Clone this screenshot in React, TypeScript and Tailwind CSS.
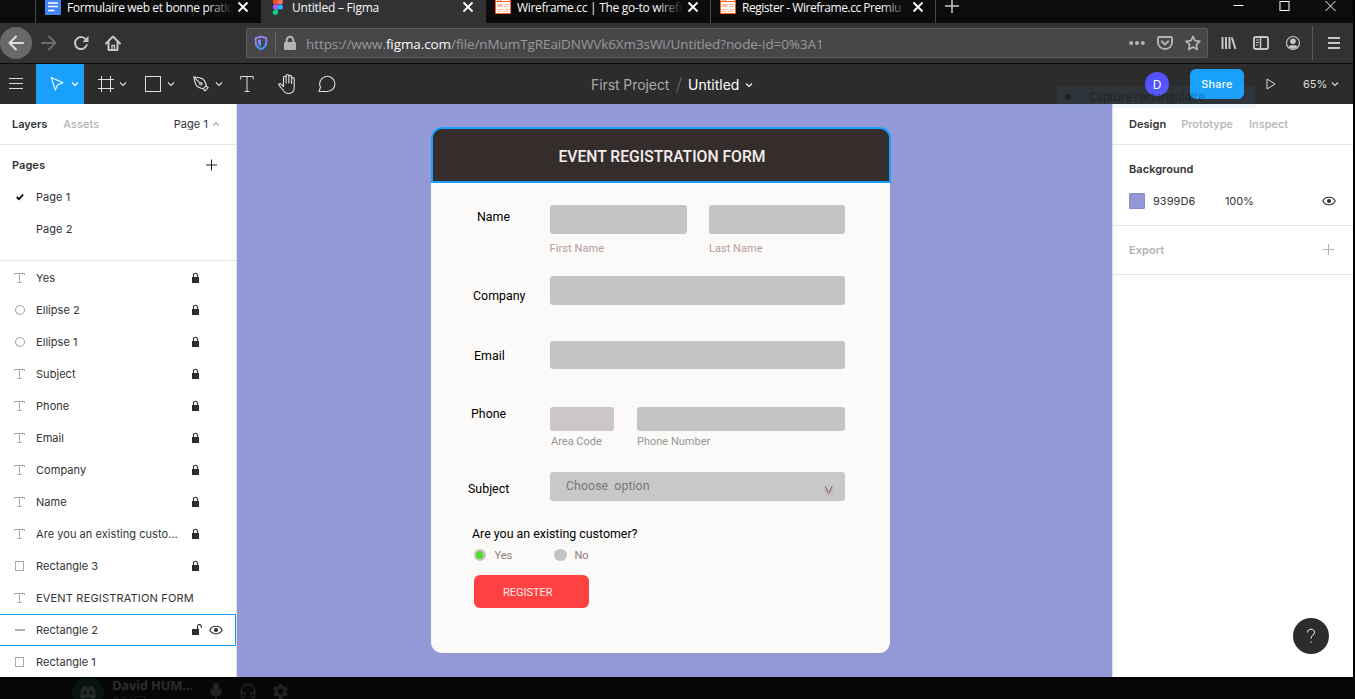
import type { ReactNode } from "react";
import { Mic, Headphones } from "lucide-react";
import { MdSettings } from "react-icons/md";

type IconProps = { children: ReactNode; w?: number; h?: number; className?: string };

function Icon({ children, w = 16, h = 16, className = "" }: IconProps) {
  return (
    <svg width={w} height={h} viewBox={`0 0 ${w} ${h}`} fill="none" stroke="currentColor" className={`shrink-0 ${className}`}>
      {children}
    </svg>
  );
}

const Chevron = ({ className = "" }: { className?: string }) => (
  <Icon w={8} h={6} className={className}>
    <path d="M1 1.5l3 3 3-3" strokeWidth="1.1" />
  </Icon>
);

const Close = () => (
  <Icon w={12} h={12} className="text-white">
    <path d="M1.5 1.5l9 9M10.5 1.5l-9 9" strokeWidth="1.8" />
  </Icon>
);

const DocsIcon = () => (
  <Icon className="mt-[-1px]">
    <rect width="16" height="16" rx="1.5" fill="#4285f4" stroke="none" />
    <path d="M3 4h10M3 7.5h10M3 11.5h6.5" stroke="#fff" strokeWidth="1.6" />
  </Icon>
);

const FigmaIcon = () => (
  <Icon w={12} h={16} className="mx-[2px] mt-[-1px]">
    <g stroke="none">
      <path d="M6 0H3.5a2.6 2.6 0 000 5.3H6z" fill="#f24e1e" />
      <path d="M6 0h2.2a2.6 2.6 0 010 5.3H6z" fill="#ff7262" />
      <path d="M6 5.3H3.5a2.6 2.6 0 000 5.3H6z" fill="#a259ff" />
      <circle cx="8.3" cy="8" r="2.6" fill="#1abcfe" />
      <path d="M3.4 10.6H6v2.6a2.6 2.6 0 11-2.6-2.6z" fill="#0acf83" />
    </g>
  </Icon>
);

const WireframeIcon = () => (
  <Icon className="mt-[-2px]">
    <rect width="16" height="16" rx="1" fill="#ff5a1f" stroke="none" />
    <rect x="1" y="4" width="14" height="11" fill="#fff" stroke="none" />
    <path d="M1 2.5h1.500M3.500 2.500h1.500M6 2.500h8.500" stroke="#fff" strokeWidth="1" />
    <rect x="2.500" y="6" width="5" height="3" fill="#ffb896" stroke="none" />
    <path d="M9 6.500h5M9 8.500h4M2.500 11.500h6M10 11.500h4M2.500 13.500h4M8 13.500h5" stroke="#ffb896" />
  </Icon>
);

type TabProps = { icon: ReactNode; title: string; titleClass: string; active?: boolean; className: string };

function Tab({ icon, title, titleClass, active, className }: TabProps) {
  return (
    <div className={`flex h-[23px] shrink-0 items-start pl-[9px] pt-0 ${active ? "bg-[#323234]" : "bg-[#0c0c0d]"} ${className}`}>
      {icon}
      <div className="relative ml-[6px] w-[166px] shrink-0 overflow-hidden">
        <span className={`block whitespace-nowrap font-['Open_Sans',sans-serif] text-[12px] leading-[16px] text-[#f9f9fa] ${titleClass}`}>{title}</span>
        {!active && <span className="absolute inset-y-0 right-0 w-[26px] bg-gradient-to-r from-transparent to-[#0c0c0d]" />}
      </div>
      <div className="ml-[4px] mt-[1px]"><Close /></div>
    </div>
  );
}

function TabBar() {
  return (
    <div className="flex h-[23px] items-start bg-[#0c0c0d]">
      <div className="h-[23px] w-[36px] border-r border-[#4a4a4b]" />
      <Tab className="w-[225px]" icon={<DocsIcon />} title="Formulaire web et bonne pratiq" titleClass="tracking-[-0.36px]" />
      <Tab className="w-[225px]" active icon={<FigmaIcon />} title="Untitled – Figma" titleClass="tracking-[-0.22px]" />
      <Tab className="w-[225px] border-r border-[#4a4a4b]" icon={<WireframeIcon />} title="Wireframe.cc | The go-to wirefr" titleClass="tracking-[-0.3px]" />
      <Tab className="w-[225px] border-r border-[#4a4a4b]" icon={<WireframeIcon />} title="Register - Wireframe.cc Premiu" titleClass="tracking-[-0.46px]" />
      <Icon className="ml-2 mt-[-2px] text-[#c8c8c9]"><path d="M8 1v14M1 8h14" strokeWidth="1.500" /></Icon>
      <div className="ml-auto flex items-start gap-[35px] pr-[17px] text-white">
        <Icon w={11} h={14}><path d="M0.500 5.500h10" strokeWidth="1" /></Icon>
        <Icon w={11} h={14}><rect x="1" y="1.500" width="9" height="9" strokeWidth="1" /></Icon>
        <Icon w={11} h={14}><path d="M0.500 1l10 10M10.500 1l-10 10" strokeWidth="1" /></Icon>
      </div>
    </div>
  );
}

function NavBar() {
  return (
    <div className="flex h-[41px] items-center border-b border-[#0c0c0d] bg-[#323234] text-[#c6c6c7]">
      <div className="flex size-8 shrink-0 items-center justify-center rounded-full bg-[#69696a]">
        <Icon className="text-[#dededf]"><path d="M15 8H1.500M8 1.500L1.500 8 8 14.500" strokeWidth="2" strokeLinecap="round" strokeLinejoin="round" /></Icon>
      </div>
      <Icon className="ml-[9px] text-[#6d6d6e]"><path d="M1 8h13.500M8 1.500L14.500 8 8 14.500" strokeWidth="2" strokeLinecap="round" strokeLinejoin="round" /></Icon>
      <Icon className="ml-[16px]">
        <path d="M13.300 5.200A6 6 0 1013.700 10" strokeWidth="2" strokeLinecap="round" />
        <path d="M15.500 1v6h-6z" fill="currentColor" stroke="none" />
      </Icon>
      <Icon className="ml-[16px]">
        <path d="M1 8.500L8 1.500l7 7M3.500 7v8h9V7" strokeWidth="2" strokeLinecap="round" strokeLinejoin="round" />
        <path d="M7 15v-4.500h2.500V15" strokeWidth="1.300" />
      </Icon>
      <div className="ml-[125px] flex h-[30px] w-[962px] items-center rounded-[2px] border border-[#5d5d5f] bg-[#474749]">
        <Icon w={14} h={16} className="ml-[7px]">
          <defs>
            <linearGradient id="shield" x1="0" y1="0" x2="0.300" y2="1">
              <stop offset="0" stopColor="#b57cf5" />
              <stop offset="1" stopColor="#3e9bff" />
            </linearGradient>
          </defs>
          <path d="M7 1.700l5.300 1.500v3.800c0 3.500-2 5.800-5.300 7.200-3.300-1.400-5.300-3.700-5.300-7.200V3.200z" stroke="url(#shield)" strokeWidth="1.900" strokeLinejoin="round" />
          <path d="M7 4.200l-3 .800v2.500c0 2 1 3.200 3 4.200z" fill="url(#shield)" stroke="none" />
        </Icon>
        <div className="ml-[7px] h-[22px] w-px bg-[#68686a]" />
        <Icon w={14} h={16} className="ml-[7px] text-[#b4b4b5]">
          <rect x="1" y="7" width="12" height="8" rx="1.300" fill="currentColor" stroke="none" />
          <path d="M3.700 8V5a3.300 3.300 0 016.600 0v3" strokeWidth="2" />
        </Icon>
        <div className="ml-[9px] whitespace-nowrap pt-[2px] font-['Open_Sans',sans-serif] text-[13.5px] leading-[20px] tracking-[-0.09px] text-[#98989a]">
          https://www.<span className="text-[#f9f9fa]">figma.com</span>/file/nMumTgREaiDNWVk6Xm3sWi/Untitled?node-id=0%3A1
        </div>
        <div className="ml-auto flex items-center gap-3 pr-[6px] text-[#b4b4b5]">
          <Icon><g fill="currentColor" stroke="none"><circle cx="2.200" cy="8" r="2" /><circle cx="8" cy="8" r="2" /><circle cx="13.800" cy="8" r="2" /></g></Icon>
          <Icon><path d="M2 2h12a1 1 0 011 1v4.500a7 6.500 0 01-14 0V3a1 1 0 011-1z" strokeWidth="1.900" /><path d="M4.700 6.300L8 9.500l3.300-3.200" strokeWidth="1.900" strokeLinecap="round" strokeLinejoin="round" /></Icon>
          <Icon><path d="M8 1.300l2 4.400 4.900.600-3.600 3.300.900 4.900L8 12.100l-4.200 2.400.900-4.900L1.100 6.300l4.900-.600z" strokeWidth="1.700" strokeLinejoin="round" /></Icon>
        </div>
      </div>
      <Icon className="ml-[13px]"><path d="M1.500 2v12M5 2v12M8.500 2v12M10.800 2.500l3.700 11.500" strokeWidth="2" /></Icon>
      <Icon className="ml-4"><rect x="1" y="2" width="14" height="12" rx="1.500" strokeWidth="1.900" /><path d="M7.500 2v12" strokeWidth="1.500" /><path d="M3 5h3M3 7.500h3M3 10h2" strokeWidth="1" /></Icon>
      <Icon className="ml-4"><circle cx="8" cy="8" r="6.500" strokeWidth="1.200" /><circle cx="8" cy="6.300" r="2.800" fill="currentColor" stroke="none" /><path d="M3.500 11.800c1-1.700 2.500-1.500 4.500-1.500s3.500-.200 4.500 1.500c-1.300 1.400-3 2-4.500 2s-3.200-.600-4.500-2z" fill="currentColor" stroke="none" /></Icon>
      <div className="ml-[11px] h-[34px] w-px bg-[#5a5a5c]" />
      <Icon className="ml-[13px]"><path d="M2 3h12M2 8h12M2 13h12" strokeWidth="2" /></Icon>
    </div>
  );
}

function Toolbar() {
  return (
    <div className="flex h-[40px] items-center bg-[#2c2c2c] font-[Inter,sans-serif] text-[#dedede]">
      <Icon w={14} h={14} className="ml-[9px] mt-[-2px]"><path d="M0 2.500h14M0 7.500h14M0 12.500h14" /></Icon>
      <div className="ml-[13px] flex h-[40px] w-[48px] items-center bg-[#18a0fb] text-white">
        <Icon w={14} h={16} className="ml-[14px]"><path d="M1.300 1.500l4 12.500 2.300-5.200L13 6.800z" strokeWidth="1.100" strokeLinejoin="round" /></Icon>
        <Chevron className="ml-[7px]" />
      </div>
      <Icon w={16} h={16} className="ml-[14px]"><path d="M3.500 0v16M12.500 0v16M0 3.500h16M0 12.500h16" /></Icon>
      <Chevron className="ml-[5px]" />
      <Icon w={16} h={16} className="ml-[18px]"><rect x="0.500" y="0.500" width="15" height="15" /></Icon>
      <Chevron className="ml-[6px]" />
      <Icon w={16} h={16} className="ml-[18px]">
        <path d="M.800.800C2.500 1.200 5.500 1.600 8.500 2.400c1.700.500 4 3.600 4.700 7.300l-2.900 3C6.500 12 3.300 9.800 2.700 8.200 1.800 5.500 1.300 3 .800.800zl6 6M10.300 12.900l1.700 2 3.200-3.200-2-1.700" strokeWidth="1.100" strokeLinejoin="round" />
        <circle cx="7.800" cy="7.800" r="1.200" strokeWidth="1.100" />
      </Icon>
      <Chevron className="ml-[6px]" />
      <Icon w={14} h={16} className="ml-[17px]"><path d="M.700 3.500v-3h12.500v3M7 .500v15M4.500 15.500h5" /></Icon>
      <Icon w={18} h={20} className="ml-[24px]">
        <path d="M5.500 11.500V3.500a1.300 1.300 0 012.600 0V9M8.100 8V1.900a1.300 1.300 0 012.700 0V9M10.800 8V2.700a1.300 1.300 0 012.700 0V9.500M13.500 8.500V5a1.300 1.300 0 012.700 0v8c0 4-2.300 6.500-5.700 6.500-3 0-4.300-1.300-5.500-3.500L1 11.200c-.600-1.200.700-2.200 1.700-1.400l2.800 2.700" strokeWidth="1.100" strokeLinecap="round" />
      </Icon>
      <Icon w={18} h={18} className="ml-[22px]"><path d="M1 16.500l1.500-4.200A7.600 7.600 0 119.300 16.500z" strokeWidth="1.100" strokeLinejoin="round" /></Icon>
      <div className="ml-[255px] flex items-center whitespace-nowrap pt-[2px] text-[14px] leading-[20px]">
        <span className="w-[79px] tracking-[-0.08px] text-[#a9a9a9]">First Project</span>
        <Icon w={8} h={18} className="ml-[5px] text-[#6e6e6e]"><path d="M1.500 16.500L6.500 1" /></Icon>
        <span className="ml-[5px] w-[52px] tracking-[0px] text-white">Untitled</span>
        <Chevron className="ml-[5px] text-white" />
      </div>
      <div className="ml-auto flex items-center pr-[14px]">
        <div className="flex size-6 items-center justify-center rounded-full bg-[#5551ff] pt-px text-[12px] text-white">D</div>
        <div className="ml-[21px] flex h-[30px] w-[54px] items-center justify-center rounded-[6px] bg-[#18a0fb] text-[11px] font-medium tracking-[0.2px] text-white">Share</div>
        <Icon w={10} h={12} className="ml-[22px]"><path d="M1 1v10l8-5z" strokeLinejoin="round" /></Icon>
        <span className="ml-[27px] w-[24px] text-[11px]">65%</span>
        <Chevron className="ml-[4px]" />
      </div>
    </div>
  );
}

const TypeGlyph = () => <Icon w={12} h={12}><path d="M0.500 3V1.500h10V3M5.500 1.500v9M3.500 10.500h4" /></Icon>;
const EllipseGlyph = () => <Icon w={12} h={12}><circle cx="6" cy="6" r="4.500" strokeWidth="1.100" /></Icon>;
const RectGlyph = () => <Icon w={12} h={12}><rect x="1.500" y="1.500" width="8" height="9" /></Icon>;
const LineGlyph = () => <Icon w={12} h={12}><path d="M1 6h10" strokeWidth="1.800" /></Icon>;

const LockIcon = () => (
  <Icon w={8} h={12} className="ml-px text-[#2c2c2c]">
    <rect x="0" y="5" width="7" height="6" fill="currentColor" stroke="none" />
    <path d="M1.500 5.500V3.300a2 2 0 014 0v2.200" strokeWidth="1.100" />
  </Icon>
);

const EyeIcon = () => (
  <Icon w={14} h={10} className="text-[#2c2c2c]">
    <path d="M.800 5C2 2.500 4.300 1.200 7 1.200S12 2.500 13.200 5C12 7.500 9.700 8.800 7 8.800S2 7.500.800 5z" strokeWidth="1.100" />
    <circle cx="7" cy="5" r="2" fill="currentColor" stroke="none" />
  </Icon>
);

type Layer = { name: string; kind: "text" | "ellipse" | "rect" | "line"; locked?: boolean; selected?: boolean };

const layers: Layer[] = [
  { name: "Yes", kind: "text", locked: true },
  { name: "Ellipse 2", kind: "ellipse", locked: true },
  { name: "Ellipse 1", kind: "ellipse", locked: true },
  { name: "Subject", kind: "text", locked: true },
  { name: "Phone", kind: "text", locked: true },
  { name: "Email", kind: "text", locked: true },
  { name: "Company", kind: "text", locked: true },
  { name: "Name", kind: "text", locked: true },
  { name: "Are you an existing custo...", kind: "text", locked: true },
  { name: "Rectangle 3", kind: "rect", locked: true },
  { name: "EVENT REGISTRATION FORM", kind: "text" },
  { name: "Rectangle 2", kind: "line", selected: true },
  { name: "Rectangle 1", kind: "rect" },
];

const glyphs = { text: <TypeGlyph />, ellipse: <EllipseGlyph />, rect: <RectGlyph />, line: <LineGlyph /> };

function LeftPanel() {
  return (
    <aside className="flex w-[237px] shrink-0 flex-col overflow-hidden border-r border-[#e0e0e0] bg-white text-[11px] leading-4 tracking-[0.05px] text-[#333]">
      <div className="flex h-[41px] shrink-0 items-center border-b border-[#e5e5e5] pl-3">
        <span className="font-semibold tracking-[-0.05px]">Layers</span>
        <span className="ml-4 font-medium text-[#b3b3b3]">Assets</span>
        <span className="ml-auto">Page 1</span>
        <Chevron className="ml-[4px] mr-[16px] rotate-180 text-[#aaa]" />
      </div>
      <div className="h-[116px] shrink-0 border-b border-[#e5e5e5] pt-1">
        <div className="flex h-8 items-center justify-between pl-3 pr-[19px]">
          <span className="font-semibold">Pages</span>
          <Icon w={12} h={12} className="text-[#222]"><path d="M6.500 0.500v11M1 6h11" /></Icon>
        </div>
        <div className="flex h-8 items-center">
          <Icon w={8} h={8} className="ml-4 text-black"><path d="M.800 4l2.200 2.200L7.200 1.500" strokeWidth="1.800" /></Icon>
          <span className="ml-3">Page 1</span>
        </div>
        <div className="flex h-8 items-center pl-9">Page 2</div>
      </div>
      <div className="flex flex-col pt-px">
        {layers.map((l) => (
          <div key={l.name} className={`flex h-8 shrink-0 items-center border-y border-r pl-[14px] ${l.selected ? "border-[#18a0fb]" : "border-transparent"}`}>
            <span className="text-[#aaa]">{glyphs[l.kind]}</span>
            <span className={`ml-[10px] w-[155px] whitespace-nowrap ${l.name === "EVENT REGISTRATION FORM" ? "tracking-[0.18px]" : ""}`}>{l.name}</span>
            {l.locked && <LockIcon />}
            {l.selected && (
              <>
                <Icon w={12} h={12} className="ml-px text-[#2c2c2c]">
                  <rect x="0" y="5" width="7" height="6" fill="currentColor" stroke="none" />
                  <path d="M5.500 5.500V2.500a1.900 1.900 0 013.800 0V4" strokeWidth="1.100" />
                </Icon>
                <div className="ml-[5px]"><EyeIcon /></div>
              </>
            )}
          </div>
        ))}
      </div>
    </aside>
  );
}

function RightPanel() {
  return (
    <aside className="flex w-[241px] shrink-0 flex-col border-l border-[#e0e0e0] bg-white text-[11px] leading-4 tracking-[0.05px] text-[#333]">
      <div className="flex h-[41px] items-center border-b border-[#e5e5e5] pl-4 font-medium tracking-[0.03px] text-[#b3b3b3]">
        <span className="font-semibold text-[#333]">Design</span>
        <span className="ml-[15px]">Prototype</span>
        <span className="ml-4">Inspect</span>
      </div>
      <div className="h-[81px] border-b border-[#e5e5e5] pl-4 pt-4">
        <div className="font-semibold">Background</div>
        <div className="mt-4 flex items-center">
          <div className="size-4 rounded-[1px] border border-[#868cc4] bg-[#9399d6]" />
          <span className="ml-2 w-[72px]">9399D6</span>
          <span className="tracking-[-0.1px]">100%</span>
          <div className="ml-auto mr-[17px]"><EyeIcon /></div>
        </div>
      </div>
      <div className="flex h-[49px] items-center justify-between border-b border-[#e5e5e5] pl-4 pr-[19px] text-[#b3b3b3]">
        <span className="font-semibold">Export</span>
        <Icon w={12} h={12}><path d="M6.500 0v11M1 5.500h11" /></Icon>
      </div>
      <div className="ml-auto mr-[24px] mt-auto mb-[23px] flex size-9 items-center justify-center rounded-full bg-[#2c2c2c] text-white">
        <Icon w={10} h={16}><path d="M1.500 4.500C1.500 2.300 3 1.200 5 1.200s3.500 1.200 3.500 3.200C8.500 7 5 7.300 5 10.500M5 13.500v1.300" strokeWidth="1" /></Icon>
      </div>
    </aside>
  );
}

const Field = ({ className }: { className: string }) => <div className={`shrink-0 rounded-[3px] bg-[#c4c4c4] ${className}`} />;

function FormCard() {
  return (
    <div className="ml-[194px] mt-[23px] flex h-[526px] w-[459px] flex-col rounded-[11px] bg-[#fbfaf8] font-[Roboto,sans-serif] text-[12.4px] leading-4 text-black">
      <div className="flex h-[56px] w-[460px] shrink-0 items-center justify-center rounded-t-[11px] border-2 border-[#189ffb] bg-[#352d2c] pt-[4px] text-[15.7px] font-medium leading-5 text-[#f3efef]">
        <span className="ml-[2px]">EVENT REGISTRATION FORM</span>
      </div>
      <div className="mt-[22px] flex h-[70px] shrink-0">
        <span className="w-[118.5px] pl-[46px] pt-[4px]">Name</span>
        <div className="w-[159.5px] text-[11px] tracking-[0.08px] text-[#b79b9b]">
          <Field className="h-[28.5px] w-[137.5px]" />
          <div className="pt-[7px]">First Name</div>
        </div>
        <div className="text-[11px] tracking-[0.04px] text-[#b79b9b]">
          <Field className="h-[28.5px] w-[136px]" />
          <div className="pt-[7px]">Last Name</div>
        </div>
      </div>
      <div className="flex h-[65px] shrink-0">
        <span className="w-[118.5px] pl-[42px] pt-[13px]">Company</span>
        <Field className="mt-[0.5px] h-[29.5px] w-[295.5px]" />
      </div>
      <div className="flex h-[66px] shrink-0">
        <span className="w-[118.5px] pl-[43px] pt-[8px]">Email</span>
        <Field className="mt-[0.5px] h-[28.5px] w-[295.5px]" />
      </div>
      <div className="flex h-[65px] shrink-0">
        <span className="w-[118.5px] pl-[40px]">Phone</span>
        <div className="w-[87.5px] text-[11px] text-[#969494]">
          <div className="mt-[0.5px] h-[24.5px] w-[64px] rounded-[3px] bg-[#cdc6c6]" />
          <div className="pl-[1.5px] pt-[3px]">Area Code</div>
        </div>
        <div className="text-[11px] text-[#969494]">
          <Field className="mt-[0.5px] h-[24.5px] w-[208px]" />
          <div className="pt-[3px]">Phone Number</div>
        </div>
      </div>
      <div className="flex h-[54px] shrink-0">
        <span className="w-[118.5px] pl-[37px] pt-[10px]">Subject</span>
        <div className="mt-[0.5px] flex h-[29.5px] w-[295.5px] items-center justify-between rounded-[3px] bg-[#c8c8c8] pl-[16.5px] pr-[11px] text-[#777]">
          <span className="whitespace-pre tracking-[0.03px]">Choose  option</span>
          <Icon w={10} h={10} className="mt-[8px] text-[#8f6060] drop-shadow-[0_2px_1px_rgba(0,0,0,0.25)]"><path d="M1.200 1l2.800 6.500h1.200L8.200 1" /></Icon>
        </div>
      </div>
      <div className="shrink-0 pl-[41px] pt-[1px]">Are you an existing customer?</div>
      <div className="mt-[5px] flex h-4 shrink-0 items-center pl-[42.5px] text-[11px] text-[#8f7a7a]">
        <div className="flex size-[12.5px] items-center justify-center rounded-full bg-[#c4c4c4]"><div className="h-[8px] w-[7px] rounded-full bg-[#55dc25]" /></div>
        <span className="ml-[8.5px] w-[59.5px] pt-[2px]">Yes</span>
        <div className="size-[12.5px] rounded-full bg-[#c4c4c4]" />
        <span className="ml-[8px] pt-[2px]">No</span>
      </div>
      <div className="ml-[42.5px] mt-[12px] flex h-[33px] w-[115.5px] shrink-0 items-center rounded-[6px] bg-[#ff4141] pl-[29.5px] pt-[2px] text-[11px] text-[#ffecec]">REGISTER</div>
    </div>
  );
}

function BottomStrip() {
  return (
    <div className="flex h-[22px] items-start overflow-hidden bg-[#060606] pl-[72px] text-[#242424]">
      <svg width="32" height="32" viewBox="0 0 32 32" className="shrink-0">
        <circle cx="16" cy="16" r="16" fill="#07130f" />
        <path d="M8 20c0-5 1-8 2.500-9.500 1.500-1 3-1.300 3.500-1.300l.700 1.300h2.600l.700-1.300c1 0 2.500.500 3.500 1.300C23 12 24 15 24 20c-2 2-4 2-4 2l-1-1.500h-6L12 22s-2 0-4-2z" fill="#262929" />
        <circle cx="13" cy="15.500" r="1.700" fill="#07130f" />
        <circle cx="19" cy="15.500" r="1.700" fill="#07130f" />
      </svg>
      <div className="ml-[8px] w-[94px] shrink-0 whitespace-nowrap font-['Open_Sans',sans-serif]">
        <div className="text-[13px] font-bold leading-[17px] tracking-[-0.25px] text-[#2d2d2d]">David HUM...</div>
        <div className="text-[11px] leading-[12px] tracking-[0.6px] text-[#1c1c1c]">#3357</div>
      </div>
      <div className="mt-[5px] flex gap-[14px] pl-px text-[#222]">
        <Mic size={18} fill="#222" />
        <Headphones size={18} />
        <MdSettings size={19} />
      </div>
    </div>
  );
}

export default function App() {
  return (
    <div className="h-[699px] w-[1355px] overflow-hidden bg-black">
      <div className="relative w-[1353px]">
        <TabBar />
        <NavBar />
        <Toolbar />
        <div className="flex h-[573px] font-[Inter,sans-serif]">
          <LeftPanel />
          <main className="min-w-0 flex-1 overflow-hidden bg-[#9399d6]"><FormCard /></main>
          <RightPanel />
        </div>
        <div className="pointer-events-none absolute left-[1057px] top-[86px] flex h-[22px] w-[198px] items-center bg-[#49a5e8]/8 font-['Open_Sans',sans-serif] text-[12px] text-black/35">
          <span className="ml-[8px] size-[6px] rounded-full bg-black/40" />
          <span className="ml-[18px] whitespace-nowrap tracking-[-0.3px]">Capture rectangulaire</span>
        </div>
      </div>
      <BottomStrip />
    </div>
  );
}
